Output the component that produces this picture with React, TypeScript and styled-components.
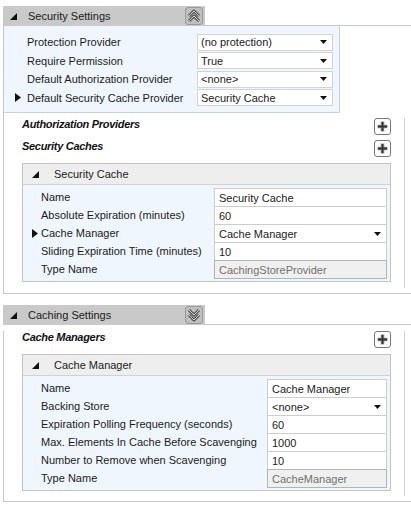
import styled, { createGlobalStyle } from "styled-components";

const GlobalStyle = createGlobalStyle`
  body {
    margin: 0;
    background: #fff;
    font-family: "Liberation Sans", Arial, sans-serif;
    font-size: 11px;
    color: #1b1b1b;
  }
`;

const Page = styled.div`
  display: flex;
  flex-direction: column;
  gap: 11px;
  padding: 6px 0 0 3px;
`;

const SectionHead = styled.div`
  display: flex;
  height: 20px;
`;

const HeadBar = styled.div`
  width: 202px;
  box-sizing: border-box;
  background: #c9c9c9;
  display: flex;
  align-items: center;
  gap: 11px;
  padding: 0 2px 0 7px;
  .toggle {
    margin-left: auto;
  }
`;

const HeadRule = styled.div`
  flex: 1;
  border-bottom: 1px solid #c6c6c6;
`;

const SectionBody = styled.div`
  border-left: 1px solid #c6c6c6;
  border-bottom: 1px solid #c6c6c6;
`;

const ToggleButton = styled.div`
  width: 18px;
  height: 18px;
  box-sizing: border-box;
  border: 1px solid #9a9a9a;
  border-radius: 3px;
  background: #bfbfbf;
  display: grid;
  place-items: center;
`;

const PropGrid = styled.div`
  width: 336px;
  box-sizing: border-box;
  background: #f0f6fd;
  border-right: 1px solid #cad1d9;
  border-bottom: 1px solid #cad1d9;
  padding: 7px 6px 5px 0;
  display: grid;
  grid-template-columns: 23px 170px 136px;
  grid-auto-rows: 18.5px;
  align-items: center;
`;

const Marker = styled.div<{ $pad: number }>`
  display: flex;
  align-items: center;
  justify-content: flex-end;
  padding-right: ${(p) => p.$pad}px;
`;

const Label = styled.div`
  white-space: nowrap;
  line-height: 18px;
`;

const Select = styled.div`
  height: 17px;
  box-sizing: border-box;
  border: 1px solid #d3d3d3;
  background: #fff;
  display: flex;
  align-items: center;
  justify-content: space-between;
  padding: 0 5px 0 3px;
  white-space: nowrap;
`;

const ListArea = styled.div<{ $top: number; $bottom: number }>`
  margin: ${(p) => p.$top}px 6px 5px 0;
  padding: 0 13px ${(p) => p.$bottom}px 18px;
  border-right: 1px solid #d4d4d4;
`;

const CollectionRow = styled.div`
  display: flex;
  justify-content: space-between;
  align-items: flex-start;
  height: 22px;
`;

const CollectionTitle = styled.div`
  font-weight: bold;
  font-style: italic;
  line-height: 12px;
  letter-spacing: -0.3px;
  color: #111;
`;

const PlusButton = styled.div`
  width: 17px;
  height: 17px;
  box-sizing: border-box;
  border: 1px solid #767676;
  border-radius: 3px;
  background: #fdfdfd;
  display: grid;
  place-items: center;
`;

const Box = styled.div`
  margin-top: 1px;
  border: 1px solid #c4c4c4;
`;

const BoxHead = styled.div`
  height: 20px;
  background: #eeeeee;
  border-bottom: 1px solid #d2d2d2;
  display: flex;
  align-items: center;
  gap: 15px;
  padding-left: 9px;
`;

const BoxBody = styled.div<{ $labelWidth: number }>`
  background: #f0f6fd;
  padding: 3px 3px 3px 0;
  display: grid;
  grid-template-columns: 18px ${(p) => p.$labelWidth}px 1fr;
  grid-auto-rows: 18px;
  align-items: center;
`;

const Editor = styled.div<{ $readOnly?: boolean }>`
  align-self: start;
  height: 19px;
  box-sizing: border-box;
  border: 1px solid ${(p) => (p.$readOnly ? "#b4b4b4" : "#cdcdcd")};
  background: ${(p) => (p.$readOnly ? "#f0f0f0" : "#fff")};
  color: ${(p) => (p.$readOnly ? "#707070" : "#1b1b1b")};
  display: flex;
  align-items: center;
  justify-content: space-between;
  padding: 0 5px 0 4px;
  white-space: nowrap;
`;

const CollapseTriangle = () => (
  <svg width="7" height="7" viewBox="0 0 7 7">
    <polygon points="7,0 7,7 0,7" fill="#111" />
  </svg>
);

const RowArrow = () => (
  <svg width="6" height="9" viewBox="0 0 6 9">
    <polygon points="0,0 6,4.5 0,9" fill="#111" />
  </svg>
);

const DropArrow = () => (
  <svg width="7" height="4" viewBox="0 0 7 4">
    <polygon points="0,0 7,0 3.5,4" fill="#111" />
  </svg>
);

const Chevrons = ({ up }: { up: boolean }) => {
  const a = up ? "M3 8 L8 3 L13 8" : "M3 3 L8 8 L13 3";
  const b = up ? "M3 13 L8 8 L13 13" : "M3 8 L8 13 L13 8";
  return (
    <svg width="16" height="16" viewBox="0 0 16 16">
      {[a, b].map((d) => (
        <g key={d}>
          <path d={d} fill="none" stroke="#505050" strokeWidth="3" strokeLinejoin="round" />
          <path d={d} fill="none" stroke="#dadada" strokeWidth="1" />
        </g>
      ))}
    </svg>
  );
};

const Plus = () => (
  <svg width="13" height="13" viewBox="0 0 13 13">
    <path d="M6.5 1.5 V11.5 M1.5 6.5 H11.5" stroke="#9a9a9a" strokeWidth="3.6" />
    <path d="M6.5 2 V11 M2 6.5 H11" stroke="#333" strokeWidth="1.8" />
  </svg>
);

const SectionHeader = ({ title, up }: { title: string; up: boolean }) => (
  <SectionHead>
    <HeadBar>
      <CollapseTriangle />
      <span>{title}</span>
      <ToggleButton className="toggle">
        <Chevrons up={up} />
      </ToggleButton>
    </HeadBar>
    <HeadRule />
  </SectionHead>
);

type Field = {
  label: string;
  value: string;
  select?: boolean;
  readOnly?: boolean;
  current?: boolean;
};

const securityProps: Field[] = [
  { label: "Protection Provider", value: "(no protection)" },
  { label: "Require Permission", value: "True" },
  { label: "Default Authorization Provider", value: "<none>" },
  { label: "Default Security Cache Provider", value: "Security Cache", current: true },
];

const securityCache: Field[] = [
  { label: "Name", value: "Security Cache" },
  { label: "Absolute Expiration (minutes)", value: "60" },
  { label: "Cache Manager", value: "Cache Manager", select: true, current: true },
  { label: "Sliding Expiration Time (minutes)", value: "10" },
  { label: "Type Name", value: "CachingStoreProvider", readOnly: true },
];

const cacheManager: Field[] = [
  { label: "Name", value: "Cache Manager" },
  { label: "Backing Store", value: "<none>", select: true },
  { label: "Expiration Polling Frequency (seconds)", value: "60" },
  { label: "Max. Elements In Cache Before Scavenging", value: "1000" },
  { label: "Number to Remove when Scavenging", value: "10" },
  { label: "Type Name", value: "CacheManager", readOnly: true },
];

const ElementBox = ({
  title,
  fields,
  labelWidth,
}: {
  title: string;
  fields: Field[];
  labelWidth: number;
}) => (
  <Box>
    <BoxHead>
      <CollapseTriangle />
      <span>{title}</span>
    </BoxHead>
    <BoxBody $labelWidth={labelWidth}>
      {fields.map((f) => [
        <Marker key={f.label + "m"} $pad={3}>
          {f.current && <RowArrow />}
        </Marker>,
        <Label key={f.label + "l"}>{f.label}</Label>,
        <Editor key={f.label + "e"} $readOnly={f.readOnly}>
          <span>{f.value}</span>
          {f.select && <DropArrow />}
        </Editor>,
      ])}
    </BoxBody>
  </Box>
);

const Collection = ({ title }: { title: string }) => (
  <CollectionRow>
    <CollectionTitle>{title}</CollectionTitle>
    <PlusButton>
      <Plus />
    </PlusButton>
  </CollectionRow>
);

const App = () => {
  return (
    <Page>
      <GlobalStyle />
      <div>
        <SectionHeader title="Security Settings" up />
        <SectionBody>
          <PropGrid>
            {securityProps.map((f) => [
              <Marker key={f.label + "m"} $pad={6}>
                {f.current && <RowArrow />}
              </Marker>,
              <Label key={f.label + "l"}>{f.label}</Label>,
              <Select key={f.label + "s"}>
                <span>{f.value}</span>
                <DropArrow />
              </Select>,
            ])}
          </PropGrid>
          <ListArea $top={5} $bottom={6}>
            <Collection title="Authorization Providers" />
            <Collection title="Security Caches" />
            <ElementBox title="Security Cache" fields={securityCache} labelWidth={173} />
          </ListArea>
        </SectionBody>
      </div>
      <div>
        <SectionHeader title="Caching Settings" up={false} />
        <SectionBody>
          <ListArea $top={6} $bottom={5}>
            <Collection title="Cache Managers" />
            <ElementBox title="Cache Manager" fields={cacheManager} labelWidth={226} />
          </ListArea>
        </SectionBody>
      </div>
    </Page>
  );
};

export default App;
